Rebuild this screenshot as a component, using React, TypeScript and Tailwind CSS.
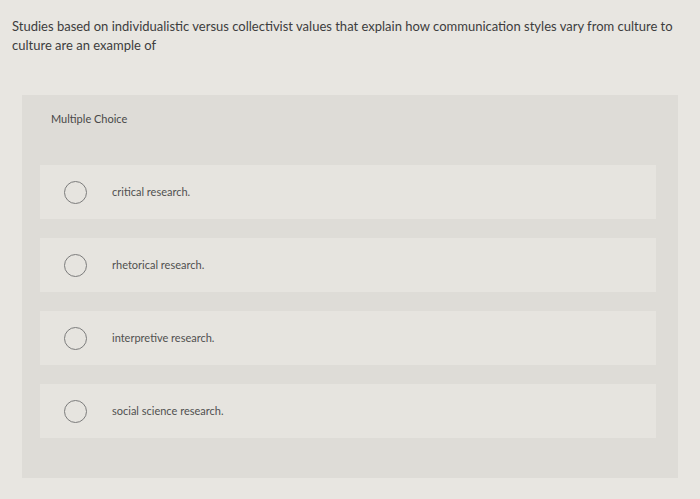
const options = [
  "critical research.",
  "rhetorical research.",
  "interpretive research.",
  "social science research.",
];

export default function App() {
  return (
    <div className="min-h-[499px] w-[700px] bg-[#e8e6e1] pt-[17px] font-['Lato',sans-serif]">
      <p className="px-3 text-[13px] leading-[19px] text-[#3d3d3d]">
        Studies based on individualistic versus collectivist values that
        explain how communication styles vary from culture to culture are an
        example of
      </p>
      <div className="mx-[22px] mt-[40px] bg-[#dedcd7] pb-[40px]">
        <div className="pl-[29px] pt-[16px] text-[11px] leading-[15px] text-[#484848]">
          Multiple Choice
        </div>
        <ul className="mt-[39px] flex flex-col gap-[19px] pl-[18px] pr-[22px]">
          {options.map((label, i) => (
            <li
              key={i}
              className="flex h-[54px] items-center bg-[#e6e4df]"
            >
              <span className="ml-[24px] h-[23px] w-[23px] shrink-0 rounded-full border-[1.5px] border-[#7c7c7c]" />
              <span className="ml-[25px] text-[11px] text-[#505050]">
                {label}
              </span>
            </li>
          ))}
        </ul>
      </div>
    </div>
  );
}
